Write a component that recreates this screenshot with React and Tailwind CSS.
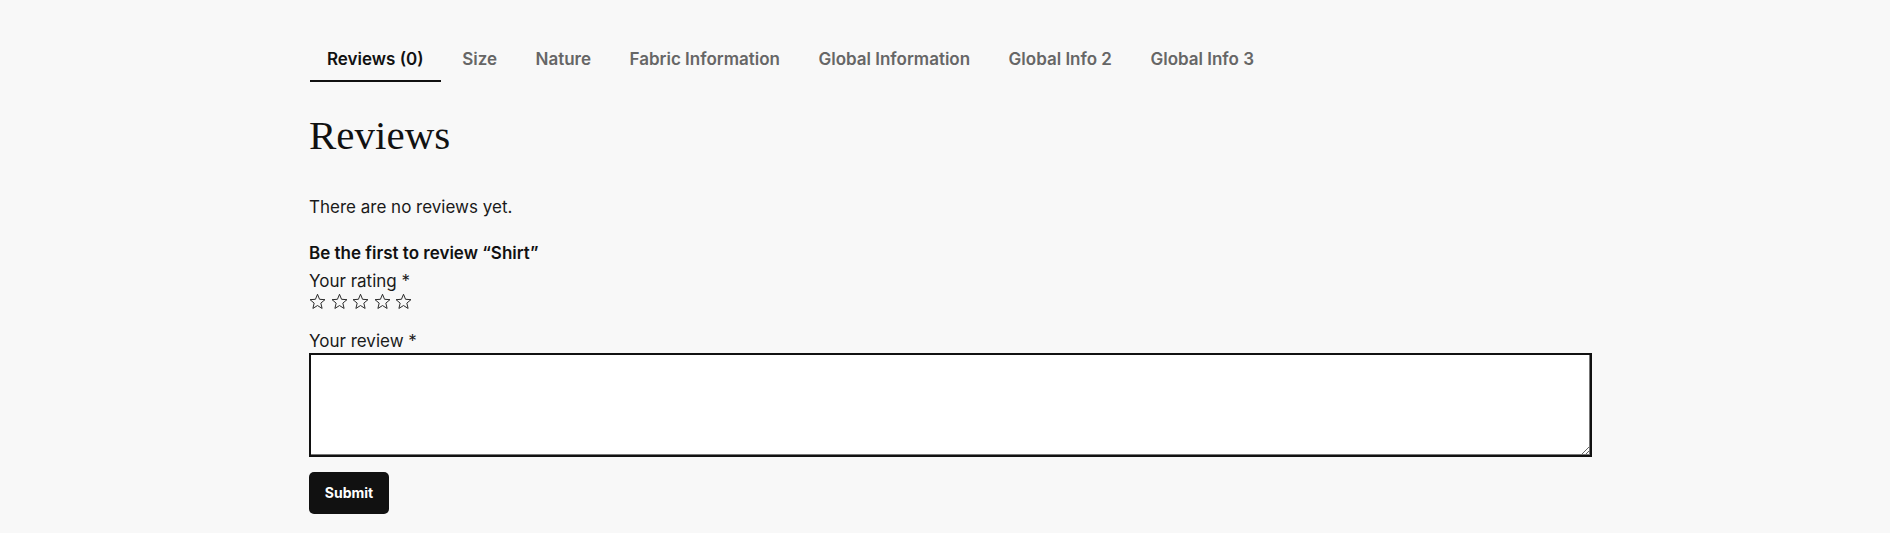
const tabs = ['Reviews (0)', 'Size', 'Nature', 'Fabric Information', 'Global Information', 'Global Info 2', 'Global Info 3']

function StarOutline() {
  return (
    <svg width="17" height="17" viewBox="0 0 24 24" fill="none" stroke="#222" strokeWidth="1.35" strokeLinejoin="miter">
      <polygon points="12,1.8 14.9,8.9 22.5,9.4 16.7,14.3 18.5,21.8 12,17.7 5.5,21.8 7.3,14.3 1.5,9.4 9.1,8.9" />
    </svg>
  )
}

export default function App() {
  return (
    <div className="min-h-screen bg-[#f8f8f8] pl-[309px] pt-[47px] font-['Inter',sans-serif] text-[17px] text-[#1a1a1a]">
      <div className="w-[1283px]">
        <ul className="ml-px flex gap-[4.5px]">
          {tabs.map((tab, i) => (
            <li
              key={tab}
              className={`border-b-2 px-[17px] pb-[9px] text-[17px] font-semibold leading-6 ${
                i === 0 ? 'border-[#111] text-[#111]' : 'border-transparent text-[#666]'
              }`}
            >
              {tab}
            </li>
          ))}
        </ul>

        <h2 className="mt-[29px] font-['Liberation_Serif',serif] text-[41px] leading-[48px] font-normal text-[#111]">Reviews</h2>

        <p className="mt-[36px] leading-6">There are no reviews yet.</p>

        <form className="mt-[22px]">
          <p className="font-semibold leading-6 text-[#111]">Be the first to review “Shirt”</p>
          <label className="mt-[4px] block leading-6">Your rating *</label>
          <div className="flex h-4 items-center gap-[4.5px]">
            {[1, 2, 3, 4, 5].map((n) => (
              <StarOutline key={n} />
            ))}
          </div>
          <label className="mt-[20px] block leading-6">Your review *</label>
          <textarea className="block h-[104px] w-full border-2 border-[#111] bg-white shadow-[inset_-1px_-1px_0_#777]" />
          <button
            type="button"
            className="mt-[15px] h-[42px] w-[80px] rounded-[5px] bg-[#111] text-sm font-bold text-white"
          >
            Submit
          </button>
        </form>
      </div>
    </div>
  )
}
